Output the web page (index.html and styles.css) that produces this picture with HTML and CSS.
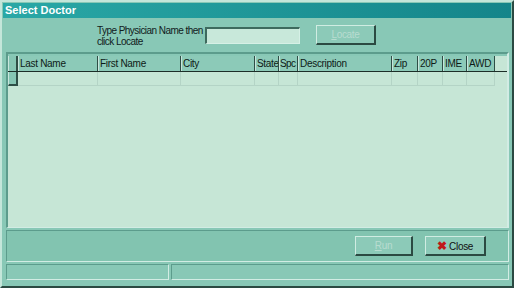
FILE: index.html
```html
<!DOCTYPE html>
<html lang="en">

<head>
    <meta charset="UTF-8">
    <title>Select Doctor</title>
    <link rel="stylesheet" href="styles.css">
</head>

<body>
    <div id="window" class="d-flex flex-direction">
        <div class="titlebar">Select Doctor</div>
        <div class="search d-flex">
            <p class="label">Type Physician Name then<br>click Locate</p>
            <input type="text" class="field">
            <button class="btn" disabled><u>L</u>ocate</button>
        </div>
        <div class="grid-panel">
            <div class="grid header">
                <div class="ind"></div>
                <div>Last Name</div>
                <div>First Name</div>
                <div>City</div>
                <div>State</div>
                <div class="tight">Spc</div>
                <div>Description</div>
                <div>Zip</div>
                <div>20P</div>
                <div>IME</div>
                <div>AWD</div>
            </div>
            <div class="grid row">
                <div class="ind"></div>
                <div></div><div></div><div></div><div></div><div></div>
                <div></div><div></div><div></div><div></div><div></div>
            </div>
        </div>
        <div class="button-panel d-flex">
            <button class="btn run" disabled><u>R</u>un</button>
            <button class="btn close"><span class="x">&#10006;</span> Close</button>
        </div>
        <div class="statusbar d-flex">
            <div class="status first"></div>
            <div class="status rest"></div>
        </div>
    </div>
</body>

</html>
```

FILE: styles.css
```css
body {
    margin: 0;
    background-color: #2b4a42;
    font-family: "Liberation Sans", Arial, sans-serif;
    font-size: 10px;
    letter-spacing: -0.3px;
}

.d-flex {
    display: flex;
}

.flex-direction {
    flex-direction: column;
}

#window {
    width: 514px;
    height: 288px;
    box-sizing: border-box;
    background-color: #88c8b6;
    border-top: 2px solid #c4e6da;
    border-left: 2px solid #c4e6da;
    border-right: 2px solid #2b4a42;
    border-bottom: 2px solid #2b4a42;
    padding: 1px;
}

.titlebar {
    height: 15px;
    line-height: 15px;
    padding-left: 2px;
    color: white;
    font-size: 11px;
    letter-spacing: 0;
    font-weight: bold;
    background: linear-gradient(to right, #2aa8a6, #14858a);
}

.search {
    height: 34px;
    align-items: center;
}

.label {
    margin: 0 0 0 94px;
    width: 108px;
    flex-shrink: 0;
    line-height: 11px;
    white-space: nowrap;
    letter-spacing: -0.55px;
    color: #10201c;
    padding-top: 1px;
}

.field {
    margin: 0;
    width: 95px;
    height: 17px;
    box-sizing: border-box;
    background-color: #c8e8da;
    border-top: 2px solid #3e6a5e;
    border-left: 2px solid #3e6a5e;
    border-right: 1px solid #d6f0e6;
    border-bottom: 1px solid #d6f0e6;
    padding: 0;
}

.btn {
    width: 60px;
    height: 20px;
    padding: 0;
    box-sizing: border-box;
    font-family: "Liberation Sans", Arial, sans-serif;
    font-size: 10px;
    letter-spacing: -0.3px;
    color: #101010;
    background-color: #8ccab8;
    border-top: 1px solid #d0ece2;
    border-left: 1px solid #d0ece2;
    border-right: 2px solid #2b4a42;
    border-bottom: 2px solid #2b4a42;
}

.btn:disabled {
    color: #b8dcd0;
}

.search .btn {
    margin-left: 16px;
}

.grid-panel {
    margin: 0 2px 0 3px;
    height: 176px;
    box-sizing: border-box;
    border-top: 2px solid #5c9c8c;
    border-left: 2px solid #5c9c8c;
    border-right: 2px solid #d2ece4;
    border-bottom: 1px solid #d2ece4;
    padding: 2px 0 0 0;
    background: linear-gradient(#88c8b6, #88c8b6) top left / 100% 2px no-repeat, #c6e6d6;
}

.grid {
    display: grid;
    grid-template-columns: 10px 80px 83px 74px 24px 19px 94px 26px 25px 24px 28px;
}

.header {
    height: 15px;
    border-bottom: 1px solid #1c2e28;
}

.header div {
    background-color: #8ccab8;
    border-left: 1px solid #c8e6dc;
    border-right: 1px solid #2e4e46;
    line-height: 15px;
    padding-left: 1px;
    white-space: nowrap;
    overflow: hidden;
    color: #0c1a16;
}

.header .tight {
    padding-left: 0;
    letter-spacing: -0.6px;
}

.row {
    height: 14px;
}

.row div {
    border-right: 1px solid #b4d4c6;
    border-bottom: 1px solid #b4d4c6;
}

.row .ind,
.header .ind {
    background-color: #86c6b4;
    border-left: 1px solid #c8e6dc;
    border-right: 2px solid #2e4e46;
    padding: 0;
}

.row .ind {
    border-bottom: 2px solid #2e4e46;
}

.button-panel {
    margin: 2px 2px 0 3px;
    height: 32px;
    box-sizing: border-box;
    justify-content: flex-end;
    align-items: center;
    padding-right: 22px;
    gap: 12px;
    border-top: 1px solid #5c9c8c;
    border-left: 1px solid #5c9c8c;
    border-right: 1px solid #d2ece4;
    border-bottom: 1px solid #d2ece4;
    background-color: #82c4b0;
}

.run {
    width: 58px;
}

.close {
    width: 61px;
}

.x {
    color: #c01818;
    font-size: 12px;
    font-weight: bold;
}

.statusbar {
    margin: 2px 2px 0 3px;
    height: 16px;
    gap: 2px;
}

.status {
    box-sizing: border-box;
    border-top: 1px solid #5c9c8c;
    border-left: 1px solid #5c9c8c;
    border-right: 1px solid #d2ece4;
    border-bottom: 1px solid #d2ece4;
}

.first {
    width: 163px;
}

.rest {
    flex-grow: 1;
}
```
